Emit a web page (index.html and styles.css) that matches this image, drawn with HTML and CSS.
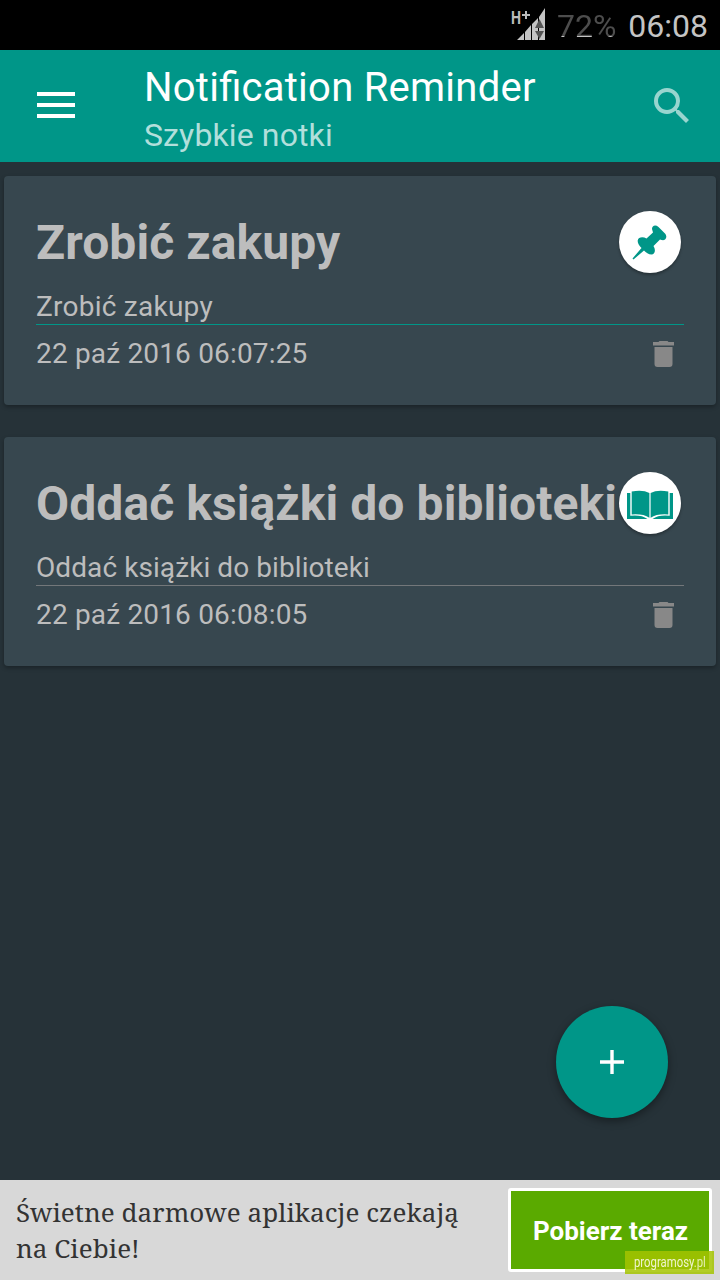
FILE: index.html
```html
<!DOCTYPE html>
<html lang="pl">
<head>
<meta charset="utf-8">
<title>Notification Reminder</title>
<link rel="stylesheet" href="styles.css">
</head>
<body>
<div class="screen">
  <div class="status">
    <svg class="signal" width="35" height="34" viewBox="0 0 35 34">
      <text class="net" x="0" y="17" textLength="10" lengthAdjust="spacingAndGlyphs">H</text>
      <path fill="#bbb" d="M11 7H14V4H16V7H19V9H16V12H14V9H11Z"/>
      <path fill="#c4c4c4" d="M6 33 13 26V33ZM14 25 20 18V33H14ZM21 17 27 11V33H21ZM28 10 34 1V33H28Z"/>
      <path fill="#555" d="M24 21 28.500 12 33 21ZM24 24H33L28.500 32Z"/>
    </svg>
    <span class="battery">72%</span>
    <span class="clock">06:08</span>
  </div>
  <header class="appbar">
    <svg class="menu" width="38" height="26" viewBox="0 0 38 26"><path fill="#fff" d="M0 0H38V4H0ZM0 11H38V15H0ZM0 22H38V26H0Z"/></svg>
    <div class="titles">
      <h1 class="title">Notification Reminder</h1>
      <p class="subtitle">Szybkie notki</p>
    </div>
    <svg class="search" width="48" height="48" viewBox="0 0 24 24"><path fill="#99d5cf" d="M15.500 14h-.79l-.28-.27A6.471 6.471 0 0 0 16 9.500 6.500 6.500 0 1 0 9.500 16c1.610 0 3.090-.59 4.230-1.570l.27.28v.79l5 4.990L20.490 19l-4.990-5zm-6 0C7.010 14 5 11.990 5 9.500S7.010 5 9.500 5 14 7.010 14 9.500 11.990 14 9.500 14z"/></svg>
  </header>
  <main class="list">
    <article class="card">
      <div class="head">
        <h2 class="name">Zrobić zakupy</h2>
        <span class="badge">
          <svg width="62" height="62" viewBox="0 0 62 62"><path fill="#009688" d="M33 18C33 14.500 36.500 13.500 39.500 16L46 22.500C49 26 46.500 30 42.500 29L41 28.500 34.500 35C37 39 36 43.500 32.500 43.500 29.500 43.500 27 41.500 25 39.500L14.500 48.500 13.500 47.500 22.500 37C20 34.500 18.500 32 18.700 29.500 19.200 26 24 25.500 27.500 27.500L34 21.500Z"/></svg>
        </span>
      </div>
      <p class="body">Zrobić zakupy</p>
      <div class="foot">
        <time class="date">22 paź 2016 06:07:25</time>
        <svg class="trash" width="21" height="26" viewBox="0 0 21 26"><path fill="#888" d="M0 1H5.500L6.500 0H14.500L15.500 1H21V4.500H0ZM1.500 6H19.500V23Q19.500 26 16.500 26H4.500Q1.500 26 1.500 23Z"/></svg>
      </div>
    </article>
    <article class="card muted">
      <div class="head">
        <h2 class="name">Oddać książki do biblioteki</h2>
        <span class="badge">
          <svg width="62" height="62" viewBox="0 0 62 62"><path fill="#009688" d="M8 21H11.300V43.800Q22 42.500 28.500 47H8ZM54 21H50.700V43.800Q40 42.500 33.500 47H54ZM12.700 19.500Q24 17.500 30.400 21V45.700Q24 41.500 12.700 42.400ZM49.300 19.500Q38 17.500 31.600 21V45.700Q38 41.500 49.300 42.400Z"/></svg>
        </span>
      </div>
      <p class="body">Oddać książki do biblioteki</p>
      <div class="foot">
        <time class="date">22 paź 2016 06:08:05</time>
        <svg class="trash" width="21" height="26" viewBox="0 0 21 26"><path fill="#888" d="M0 1H5.500L6.500 0H14.500L15.500 1H21V4.500H0ZM1.500 6H19.500V23Q19.500 26 16.500 26H4.500Q1.500 26 1.500 23Z"/></svg>
      </div>
    </article>
  </main>
  <button class="fab" aria-label="Dodaj"><svg width="24" height="24" viewBox="0 0 24 24"><path fill="#fff" d="M10.300 0h3.400v10.300H24v3.400H13.700V24h-3.400V13.700H0v-3.400h10.300z"/></svg></button>
  <footer class="ad">
    <p class="adtext">Świetne darmowe aplikacje czekają<br>na Ciebie!</p>
    <a class="cta">Pobierz teraz</a>
    <span class="mark"><span class="marktext">programosy<span class="tld">.pl</span></span></span>
  </footer>
</div>
</body>
</html>
```
FILE: styles.css
```css
* { box-sizing: border-box; }
body { margin: 0; }
h1, h2, p { margin: 0; font-weight: 400; white-space: nowrap; }
svg { display: block; flex: none; }

.screen {
  position: relative;
  display: flex;
  flex-direction: column;
  width: 720px;
  height: 1280px;
  overflow: hidden;
  background: #263238;
  font-family: Roboto, sans-serif;
}

.status {
  display: flex;
  align-items: flex-start;
  justify-content: flex-end;
  height: 50px;
  padding: 7px 12px 0 0;
  background: #000;
  font-size: 32px;
  line-height: 38px;
}
.net { font: 700 18px Roboto, sans-serif; fill: #bbb; }
.battery {
  margin-left: 11px;
  color: transparent;
  background: linear-gradient(#4d4d4d 29px, #c4c4c4 29px);
  background-clip: text;
  -webkit-background-clip: text;
}
.clock { margin-left: 12px; color: #c4c4c4; }

.appbar {
  display: flex;
  height: 112px;
  padding: 0 24px 0 37px;
  background: #009688;
}
.menu { margin-top: 42px; }
.titles { flex: 1; padding: 14px 0 0 69px; }
.title {
  font-size: 40px;
  line-height: 48px;
  letter-spacing: .25px;
  font-feature-settings: "liga" 1;
  color: #fff;
}
.subtitle { margin-top: 3px; font-size: 32px; line-height: 40px; letter-spacing: .12px; color: #b2dfdb; }
.search { margin-top: 32px; }

.list {
  display: flex;
  flex: 1;
  flex-direction: column;
  gap: 32px;
  padding: 14px 4px 0;
}
.card {
  height: 229px;
  padding: 34px 32px 0;
  border-radius: 4px;
  background: #37474f;
  box-shadow: 0 2px 4px rgba(0, 0, 0, .3);
  color: #bdbdbd;
}
.head { display: flex; justify-content: space-between; padding-right: 3px; }
.name { width: 583px; padding-top: 5px; font-size: 48px; font-weight: 700; line-height: 56px; letter-spacing: .08px; }
.badge {
  flex: none;
  width: 62px;
  height: 62px;
  margin-top: 1px;
  border-radius: 50%;
  background: #fff;
  box-shadow: 0 2px 3px rgba(0, 0, 0, .3);
}
.body {
  height: 52px;
  padding-top: 17px;
  border-bottom: 1px solid #009688;
  font-size: 28px;
  line-height: 34px;
  letter-spacing: .25px;
}
.muted .body { border-color: #73777a; letter-spacing: .08px; }
.foot { display: flex; justify-content: space-between; padding: 12px 10px 0 0; }
.date { font-size: 28px; line-height: 34px; letter-spacing: .17px; }
.trash { margin-top: 4px; }

.fab {
  position: absolute;
  right: 52px;
  bottom: 162px;
  display: flex;
  align-items: center;
  justify-content: center;
  width: 112px;
  height: 112px;
  padding: 0;
  border: 0;
  border-radius: 50%;
  background: #009688;
  box-shadow: 0 3px 8px rgba(0, 0, 0, .4);
}

.ad {
  position: relative;
  display: flex;
  justify-content: space-between;
  height: 100px;
  padding: 8px 8px 8px 16px;
  background: #d8d8d8;
}
.adtext {
  padding-top: 6px;
  font-family: "Noto Serif", "Droid Serif", "DejaVu Serif Condensed", "DejaVu Serif", serif;
  font-size: 26px;
  line-height: 36px;
  letter-spacing: .06px;
  color: #333;
}
.cta {
  width: 204px;
  height: 84px;
  padding-left: 1px;
  border: 3px solid #fff;
  border-radius: 3px;
  background: #5aaa00;
  font-size: 26px;
  font-weight: 700;
  line-height: 80px;
  text-align: center;
  color: #fff;
}
.mark {
  position: absolute;
  right: 6px;
  bottom: 6px;
  width: 89px;
  height: 23px;
  padding-left: 9px;
  background: rgba(164, 196, 0, .85);
  font-size: 14px;
  line-height: 22px;
  color: #f0f4d0;
}
.marktext { display: inline-block; transform: scaleX(.81); transform-origin: left; }
.tld { color: #e3edae; }
```
